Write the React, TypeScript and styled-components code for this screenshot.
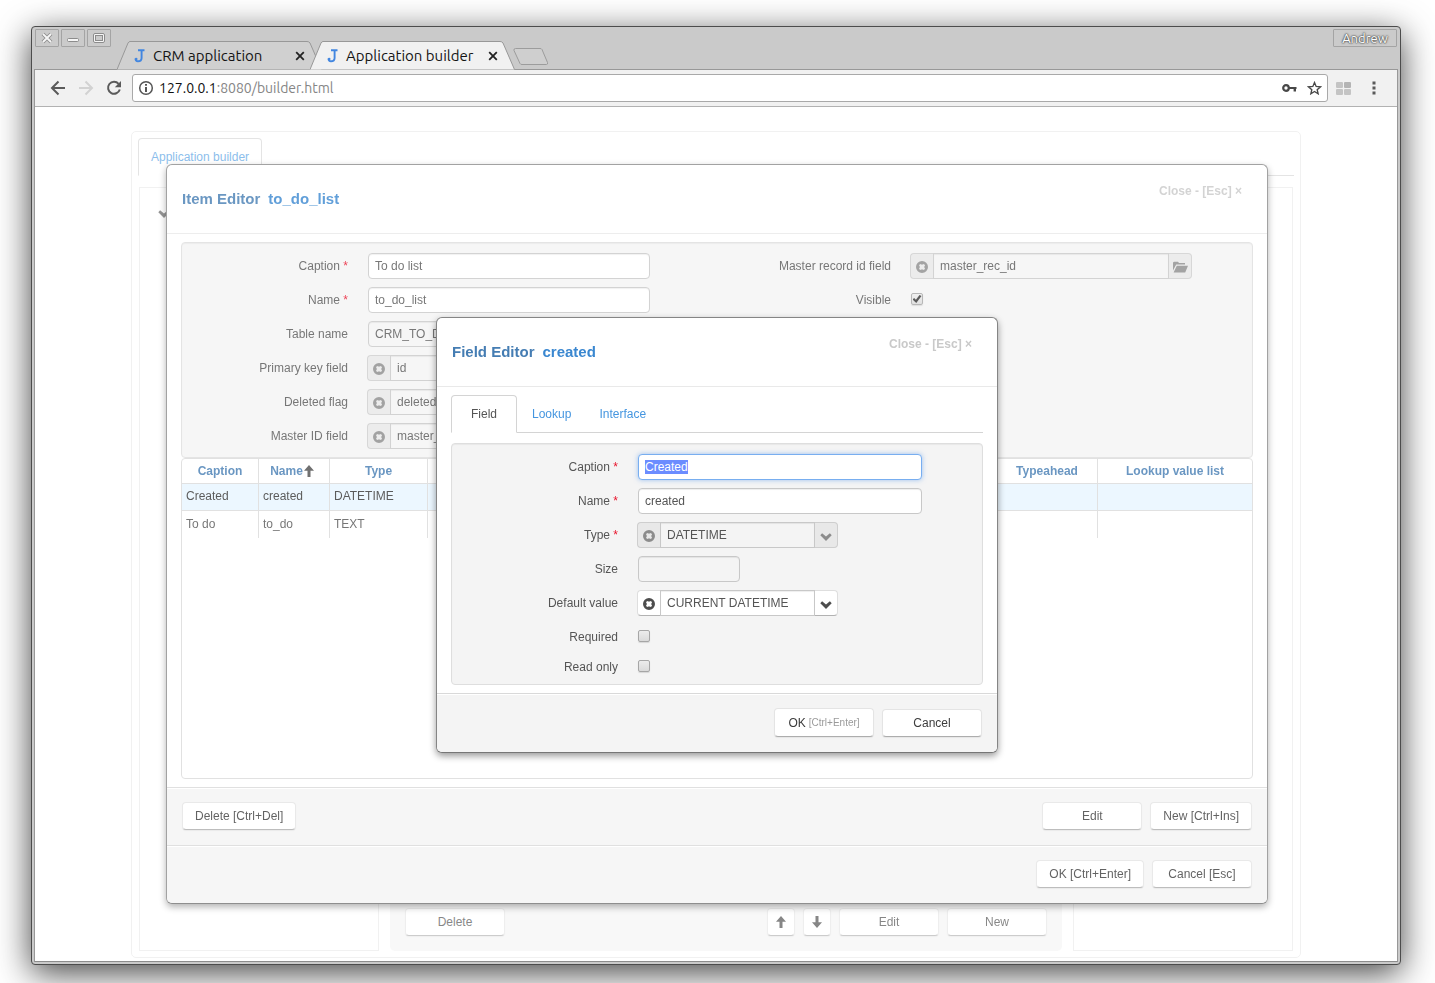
import React, { useEffect, useRef } from "react";
import styled, { createGlobalStyle, css } from "styled-components";

const GlobalStyle = createGlobalStyle`
  * { box-sizing: border-box; }
  body {
    margin: 0;
    background: #fff;
    font-family: "Liberation Sans", Arial, sans-serif;
    font-size: 12px;
    line-height: 18px;
    color: #555;
  }
  button, input { font: inherit; color: inherit; }
  ::selection { background: #6b8cff; color: #fff; }
`;

const UI_FONT = `Ubuntu, "Noto Sans", "Open Sans", sans-serif`;

/* ---------- Desktop window ---------- */

const Desktop = styled.div`
  height: 100vh;
  padding: 26px 34px 18px 31px;
  overflow: hidden;
  background: #fff;
`;

const Window = styled.div`
  display: flex;
  flex-direction: column;
  height: 100%;
  padding: 2px;
  border: 1px solid #4c4c4c;
  border-radius: 4px;
  background: #cacaca;
  box-shadow: 0 8px 34px rgba(0, 0, 0, 0.74);
`;

const TitleBar = styled.div`
  display: flex;
  align-items: flex-start;
  height: 40px;
  padding: 0 1px;
`;

const WindowButtons = styled.div`
  display: flex;
  gap: 2px;
`;

const WindowButton = styled.button`
  display: flex;
  align-items: center;
  justify-content: center;
  width: 24px;
  height: 18px;
  padding: 0;
  border: 1px solid #a4a4a4;
  border-radius: 1px;
  background: #cbcbcb;
`;

const TabStrip = styled.div`
  display: flex;
  flex: 1;
  align-self: flex-end;
  margin-left: 6px;
`;

const BrowserTab = styled.div<{ $active?: boolean }>`
  position: relative;
  z-index: ${(p) => (p.$active ? 2 : 1)};
  display: flex;
  align-items: center;
  width: 205px;
  height: 28px;
  margin-right: -12px;
  padding: 1px 17px 0 17px;
  color: #141414;
  font: 15px/20px ${UI_FONT};
`;

const TabShape = styled.svg`
  position: absolute;
  inset: 0;
`;

const TabTitle = styled.span`
  position: relative;
  flex: 1;
  margin-left: 7px;
  white-space: nowrap;
`;

const Favicon = styled.svg`
  position: relative;
  flex: none;
`;

const TabClose = styled.button`
  position: relative;
  display: flex;
  padding: 0;
  border: 0;
  background: none;
`;

const NewTab = styled.button`
  display: flex;
  margin: 7px 0 0 10px;
  padding: 0;
  border: 0;
  background: none;
`;

const UserButton = styled.button`
  width: 64px;
  height: 18px;
  padding: 0;
  border: 1px solid #a4a4a4;
  border-radius: 1px;
  background: #cbcbcb;
  color: #fff;
  font: 13px/16px ${UI_FONT};
  text-shadow: 0 0 1px #444, 0 0 2px #555, 0 0 2px #555;
`;

const Frame = styled.div`
  display: flex;
  flex: 1;
  flex-direction: column;
  min-height: 0;
  border: 1px solid #989898;
  border-bottom-color: #8c8c8c;
  background: #fff;
`;

const Toolbar = styled.div`
  display: flex;
  align-items: center;
  height: 37px;
  padding: 0 8px 0 9px;
  border-bottom: 1px solid #b2b2b2;
  background: #f1f1f1;
`;

const ToolButton = styled.button<{ $width?: number }>`
  display: flex;
  justify-content: center;
  width: ${(p) => p.$width ?? 28}px;
  padding: 0;
  border: 0;
  background: none;
`;

const Omnibox = styled.div`
  display: flex;
  flex: 1;
  align-items: center;
  height: 28px;
  margin: 0 1px 0 4px;
  padding: 0 5px;
  border: 1px solid #a9a9a9;
  border-radius: 3px;
  background: #fff;
`;

const Url = styled.div`
  flex: 1;
  margin-left: 5px;
  color: #858585;
  font: 14px/20px ${UI_FONT};
`;

const Host = styled.span`
  color: #111;
`;

/* ---------- Page behind the dialogs ---------- */

const Page = styled.div`
  position: relative;
  display: flex;
  flex: 1;
  justify-content: center;
  min-height: 0;
  padding: 24px 16px 3px;
  overflow: hidden;
`;

const Backdrop = styled.main`
  display: flex;
  flex: 1;
  flex-direction: column;
  max-width: 1170px;
  padding: 6px;
  border: 1px solid #e8e8e8;
  border-radius: 5px;
  opacity: 0.62;
`;

const TabBar = styled.div`
  display: flex;
  border-bottom: 1px solid #d4d4d4;
`;

const TabItem = styled.button<{ $active?: boolean; $link?: boolean }>`
  height: 38px;
  margin: 0 2px -1px 0;
  padding: 0 ${(p) => (p.$link ? 12 : 19)}px;
  border: 1px solid transparent;
  border-radius: 4px 4px 0 0;
  background: none;
  color: ${(p) => (p.$link || !p.$active ? "#4596e0" : "#555")};
  ${(p) =>
    p.$active &&
    css`
      border-color: #d4d4d4;
      border-bottom-color: #fff;
      background: #fff;
    `}
`;

const Columns = styled.div`
  display: grid;
  flex: 1;
  grid-template-columns: 240px 1fr 220px;
  gap: 11px;
  padding: 11px 1px 0;
`;

const SidePane = styled.section`
  display: flex;
  align-items: flex-start;
  padding: 20px 18px;
  border: 1px solid #e8e8e8;
`;

const MainPane = styled.section`
  display: flex;
  flex-direction: column;
  justify-content: flex-end;
`;

const PaneFooter = styled.div`
  display: flex;
  gap: 8px;
  padding: 15px;
  border-radius: 0 0 5px 5px;
  background: #f4f4f4;
`;

const Spacer = styled.div`
  flex: 1;
`;

const Button = styled.button<{ $icon?: boolean; $tall?: boolean }>`
  display: flex;
  align-items: center;
  justify-content: center;
  min-width: ${(p) => (p.$icon ? 28 : 100)}px;
  height: ${(p) => (p.$tall ? 29 : 28)}px;
  padding: 0 ${(p) => (p.$icon ? 0 : 12)}px;
  border: 1px solid #e4e4e4;
  border-bottom-color: #adadad;
  border-radius: 4px;
  background: #fff;
  color: #3c3c3c;
  box-shadow: 0 1px 1px rgba(0, 0, 0, 0.06);
`;

const Hint = styled.small`
  margin-left: 3px;
  color: #9a9a9a;
  font-size: 10px;
`;

/* ---------- Dialogs ---------- */

const Layer = styled.div<{ $top: number }>`
  position: absolute;
  inset: 0;
  display: flex;
  align-items: flex-start;
  justify-content: center;
  padding: ${(p) => p.$top}px 16px 0 18px;
`;

const Dialog = styled.section<{ $width: number; $behind?: boolean }>`
  width: 100%;
  max-width: ${(p) => p.$width}px;
  overflow: hidden;
  border: 1px solid ${(p) => (p.$behind ? "#a2a2a2" : "#858585")};
  border-bottom-color: ${(p) => (p.$behind ? "#8e8e8e" : "#767676")};
  border-radius: 6px;
  background: #fff;
  box-shadow: 0 3px 7px rgba(0, 0, 0, ${(p) => (p.$behind ? 0.3 : 0.4)});
`;

const DialogContent = styled.div<{ $behind?: boolean }>`
  opacity: ${(p) => (p.$behind ? 0.8 : 1)};
`;

const DialogHeader = styled.header`
  display: flex;
  justify-content: space-between;
  height: 69px;
  padding: 17px 25px 0 15px;
  border-bottom: 1px solid #e9e9e9;
`;

const DialogTitle = styled.h2`
  display: flex;
  gap: 8px;
  margin: 7px 0 0;
  color: #457db3;
  font-size: 15px;
  line-height: 20px;
`;

const TitleItem = styled.span`
  color: #3a87d0;
`;

const CloseButton = styled.button`
  height: 18px;
  padding: 0;
  border: 0;
  background: none;
  color: #c9c9c9;
  font-weight: bold;
`;

const DialogBody = styled.div`
  padding: 8px 14px;
`;

const Well = styled.div`
  display: grid;
  grid-auto-flow: column;
  grid-auto-columns: 1fr;
  gap: 16px;
  padding-top: 10px;
  border: 1px solid #dedede;
  border-radius: 4px;
  background: #f4f4f4;
  box-shadow: inset 0 1px 1px rgba(0, 0, 0, 0.05);
`;

const TabbedWell = styled(Well)`
  margin-top: 10px;
`;

const FieldRow = styled.div<{ $tight?: boolean }>`
  display: flex;
  align-items: center;
  height: 26px;
  margin-bottom: ${(p) => (p.$tight ? 4 : 8)}px;
`;

const Label = styled.label`
  width: 166px;
  margin-right: 19px;
  text-align: right;
`;

const Required = styled.span`
  color: #e8132b;
`;

const TextInput = styled.input<{ $width: number; $focused?: boolean }>`
  width: ${(p) => p.$width}px;
  height: 26px;
  margin: 0 1px;
  padding: 0 6px 1px;
  border: 1px solid #c8c8c8;
  border-radius: 4px;
  outline: none;
  background: #fff;
  box-shadow: inset 0 1px 1px rgba(0, 0, 0, 0.07);
  &:disabled {
    background: #f4f4f4;
    color: #555;
  }
  ${(p) =>
    p.$focused &&
    css`
      border-color: #78aef0;
      box-shadow: 0 0 5px rgba(82, 150, 236, 0.55);
    `}
`;

const Group = styled.div<{ $width: number }>`
  display: flex;
  width: ${(p) => p.$width}px;
`;

const GroupInput = styled.input`
  flex: 1;
  min-width: 0;
  height: 26px;
  padding: 0 6px 1px;
  border: 1px solid #c8c8c8;
  outline: none;
  background: #fff;
  box-shadow: inset 0 1px 1px rgba(0, 0, 0, 0.07);
  &:disabled {
    background: #f4f4f4;
    color: #555;
  }
`;

const AddOn = styled.button<{ $side: "left" | "right" }>`
  display: flex;
  align-items: center;
  justify-content: center;
  width: 23px;
  height: 26px;
  padding: 2px 0 0;
  border: 1px solid #dedede;
  border-bottom-color: #b2b2b2;
  ${(p) =>
    p.$side === "left"
      ? "border-right: 0; border-radius: 4px 0 0 4px;"
      : "border-left: 0; border-radius: 0 4px 4px 0;"}
  background: #fff;
  color: #4d4d4d;
  &:disabled {
    border-color: #cecece;
    background: #e8e8e8;
    color: #8c8c8c;
  }
`;

const Check = styled.input`
  appearance: none;
  display: grid;
  place-items: center;
  width: 12px;
  height: 12px;
  margin: 0 1px 2px;
  border: 1px solid #a6a6a6;
  border-radius: 2px;
  background: linear-gradient(#ececec, #dadada);
  box-shadow: 0 1px 1px rgba(0, 0, 0, 0.12);
  &:checked::before {
    content: "";
    width: 9px;
    height: 8px;
    background: #333;
    clip-path: polygon(0 55%, 18% 38%, 38% 58%, 78% 0, 100% 14%, 42% 100%);
  }
`;

const GridBox = styled.div`
  min-height: 321px;
  border: 1px solid #dadada;
  border-radius: 4px;
`;

const Grid = styled.table`
  width: 100%;
  border-collapse: separate;
  border-spacing: 0;
  table-layout: fixed;
`;

const HeadCell = styled.th<{ $width?: number }>`
  width: ${(p) => (p.$width ? `${p.$width}px` : "auto")};
  height: 25px;
  padding: 0;
  border-bottom: 1px solid #dadada;
  color: #457db3;
  & + & {
    border-left: 1px solid #dadada;
  }
`;

const Row = styled.tr<{ $selected?: boolean }>`
  background: ${(p) => (p.$selected ? "#e8f6ff" : "none")};
  color: ${(p) => (p.$selected ? "#333" : "#555")};
`;

const Cell = styled.td<{ $last?: boolean }>`
  height: 27px;
  padding: 0 4px 2px;
  ${(p) => !p.$last && "border-bottom: 1px solid #dadada;"}
  & + & {
    border-left: 1px solid #dadada;
  }
`;

const SortLabel = styled.span`
  display: inline-flex;
  align-items: center;
  gap: 1px;
  padding-right: 4px;
  color: #457db3;
  svg { color: #4d4d4d; }
`;

const DialogFooter = styled.footer`
  display: flex;
  align-items: flex-end;
  gap: 8px;
  padding: 14px 15px 15px;
  border-top: 1px solid #d9d9d9;
  background: #f4f4f4;
  box-shadow: inset 0 1px 0 #fff;
`;

/* ---------- Icons ---------- */

const RemoveIcon = () => (
  <svg width="12" height="12" viewBox="0 0 12 12" aria-hidden="true">
    <path
      d="M6 0A6 6 0 0 1 6 12A6 6 0 0 1 6 0ZM4.200 2.900 3 4.200 3.700 5.200V6.800L3 7.800 4.200 9.100 5.200 8.400H6.800L7.800 9.100 9.100 7.800 8.400 6.800V5.200L9.100 4.200 7.800 2.900 6.800 3.600H5.200Z"
      fill="currentColor"
      fillRule="evenodd"
    />
  </svg>
);

const ChevronIcon = () => (
  <svg width="12" height="10" viewBox="0 -2 12 10" aria-hidden="true">
    <path d="M2.1 0.2 6 3.6 9.9 0.2 11.7 2.2 6 8 0.3 2.2Z" fill="currentColor" />
  </svg>
);

const FolderIcon = () => (
  <svg width="15" height="12" viewBox="0 0 15 12" aria-hidden="true">
    <path d="M0 9.5V1.5L1 .8H5L6 2H12V3.6H3.2Z M3.8 4.8H15L12.2 11.6H.6Z" fill="currentColor" />
  </svg>
);

const ArrowIcon = ({ down }: { down?: boolean }) => (
  <svg width="10" height="12" viewBox="0 0 10 12" aria-hidden="true">
    <path
      d={down ? "M3.5 0h3v6.2H10L5 12 0 6.2h3.5Z" : "M3.5 12h3V5.8H10L5 0 0 5.8h3.5Z"}
      fill="currentColor"
    />
  </svg>
);

const TabCloseIcon = () => (
  <svg width="10" height="10" viewBox="0 0 10 10" aria-hidden="true">
    <path d="M1.2 1.2 8.8 8.8M8.8 1.2 1.2 8.8" stroke="#222" strokeWidth="1.8" />
  </svg>
);

const FaviconJ = () => (
  <Favicon width="12" height="14" viewBox="0 0 12 14" aria-hidden="true">
    <path
      d="M4 1.3H10.500M7.600 1.300V9C7.600 11.400 6 12.300 4 12.300 2.400 12.300 1.400 11.500 1.500 9.600"
      fill="none"
      stroke="#4286e0"
      strokeWidth="1.9"
    />
    <circle cx="2.200" cy="10" r="1.300" fill="#4286e0" />
  </Favicon>
);

/* ---------- Composite parts ---------- */

type TabProps = { title: string; active?: boolean };

const ChromeTab = ({ title, active }: TabProps) => (
  <BrowserTab $active={active}>
    <TabShape width="205" height="29" viewBox="0 0 205 29" aria-hidden="true">
      <path
        d="M0 28.5 11 2Q12 .5 13 .5H190Q192 .5 193 2L204.500 28.5"
        fill={active ? "#f1f1f1" : "#d0d0d0"}
        stroke="#989898"
      />
    </TabShape>
    <FaviconJ />
    <TabTitle>{title}</TabTitle>
    <TabClose aria-label={`Close ${title}`}>
      <TabCloseIcon />
    </TabClose>
  </BrowserTab>
);

type FieldProps = {
  id: string;
  label: string;
  required?: boolean;
  tight?: boolean;
  children: React.ReactNode;
};

const Field = ({ id, label, required, tight, children }: FieldProps) => (
  <FieldRow $tight={tight}>
    <Label htmlFor={id}>
      {label}
      {required && <Required> *</Required>}
    </Label>
    {children}
  </FieldRow>
);

type PickerProps = {
  id: string;
  value: string;
  width: number;
  disabled?: boolean;
  icon: React.ReactNode;
};

const Picker = ({ id, value, width, disabled, icon }: PickerProps) => (
  <Group $width={width}>
    <AddOn $side="left" disabled={disabled} aria-label="Clear">
      <RemoveIcon />
    </AddOn>
    <GroupInput id={id} defaultValue={value} disabled={disabled} />
    <AddOn $side="right" disabled={disabled} aria-label="Choose">
      {icon}
    </AddOn>
  </Group>
);

const BrowserToolbar = () => (
  <Toolbar>
    <ToolButton aria-label="Back">
      <svg width="16" height="16" viewBox="0 0 16 16">
        <path d="M15 8H2.500M8.500 1.500 2 8 8.500 14.500" fill="none" stroke="#5a5a5a" strokeWidth="2" />
      </svg>
    </ToolButton>
    <ToolButton aria-label="Forward">
      <svg width="16" height="16" viewBox="0 0 16 16">
        <path d="M1 8H13.500M7.500 1.500 14 8 7.500 14.500" fill="none" stroke="#d2d2d2" strokeWidth="2" />
      </svg>
    </ToolButton>
    <ToolButton aria-label="Reload">
      <svg width="16" height="16" viewBox="0 0 16 16">
        <path d="M12.600 3.800A6 6 0 1 0 13.800 9.500" fill="none" stroke="#5a5a5a" strokeWidth="2" />
        <path d="M15 1V7.200H8.800Z" fill="#5a5a5a" />
      </svg>
    </ToolButton>
    <Omnibox>
      <svg width="16" height="16" viewBox="0 0 16 16" aria-hidden="true">
        <circle cx="8" cy="8" r="6.300" fill="none" stroke="#555" strokeWidth="1.500" />
        <path d="M7.100 7H8.900V12H7.100ZM7.100 4H8.900V5.700H7.100Z" fill="#444" />
      </svg>
      <Url>
        <Host>127.0.0.1</Host>:8080/builder.html
      </Url>
      <ToolButton $width={36} aria-label="Saved passwords">
        <svg width="15" height="8" viewBox="0 0 15 8">
          <circle cx="4" cy="4" r="2.800" fill="none" stroke="#484848" strokeWidth="2.200" />
          <path d="M7 3H14.500V5H14V7.500H11.600V5H7Z" fill="#484848" />
        </svg>
      </ToolButton>
      <svg width="15" height="14" viewBox="0 0 24 23" aria-hidden="true">
        <path
          d="M12 2.500 14.700 9 21.800 9.600 16.400 14.200 18 21 12 17.300 6 21 7.600 14.200 2.200 9.600 9.300 9Z"
          fill="none"
          stroke="#484848"
          strokeWidth="2.200"
        />
      </svg>
    </Omnibox>
    <ToolButton $width={30} aria-label="Extension">
      <svg width="16" height="13" viewBox="0 0 16 13">
        <rect width="7" height="6" rx="1" fill="#c4c4c4" />
        <rect x="8" width="7" height="6" rx="1" fill="#b4b4b4" />
        <rect y="7" width="7" height="6" rx="1" fill="#c4c4c4" />
        <rect x="8" y="7" width="7" height="6" rx="1" fill="#c4c4c4" />
      </svg>
    </ToolButton>
    <ToolButton $width={30} aria-label="Menu">
      <svg width="4" height="14" viewBox="0 0 4 14">
        <path d="M.5.500h3v3h-3ZM.5 5.500h3v3h-3ZM.5 10.500h3v3h-3Z" fill="#5a5a5a" />
      </svg>
    </ToolButton>
  </Toolbar>
);

const ItemEditor = () => (
  <Dialog $width={1102} $behind>
    <DialogContent $behind>
      <DialogHeader>
        <DialogTitle>
          Item Editor <TitleItem>to_do_list</TitleItem>
        </DialogTitle>
        <CloseButton>Close - [Esc] ×</CloseButton>
      </DialogHeader>
      <DialogBody>
        <Well>
          <div>
            <Field id="item-caption" label="Caption" required>
              <TextInput id="item-caption" $width={282} defaultValue="To do list" />
            </Field>
            <Field id="item-name" label="Name" required>
              <TextInput id="item-name" $width={282} defaultValue="to_do_list" />
            </Field>
            <Field id="item-table" label="Table name">
              <TextInput id="item-table" $width={282} defaultValue="CRM_TO_DO_LIST" disabled />
            </Field>
            <Field id="item-key" label="Primary key field">
              <Picker id="item-key" value="id" width={282} disabled icon={<FolderIcon />} />
            </Field>
            <Field id="item-deleted" label="Deleted flag">
              <Picker id="item-deleted" value="deleted" width={282} disabled icon={<FolderIcon />} />
            </Field>
            <Field id="item-master" label="Master ID field">
              <Picker id="item-master" value="master_id" width={282} disabled icon={<FolderIcon />} />
            </Field>
          </div>
          <div>
            <Field id="item-record" label="Master record id field">
              <Picker id="item-record" value="master_rec_id" width={282} disabled icon={<FolderIcon />} />
            </Field>
            <Field id="item-visible" label="Visible">
              <Check id="item-visible" type="checkbox" defaultChecked />
            </Field>
          </div>
        </Well>
        <GridBox>
          <Grid>
            <thead>
              <tr>
                <HeadCell $width={76}>Caption</HeadCell>
                <HeadCell $width={71}>
                  <SortLabel>
                    Name
                    <ArrowIcon />
                  </SortLabel>
                </HeadCell>
                <HeadCell $width={98}>Type</HeadCell>
                <HeadCell />
                <HeadCell $width={101}>Typeahead</HeadCell>
                <HeadCell $width={155}>Lookup value list</HeadCell>
              </tr>
            </thead>
            <tbody>
              {[
                ["Created", "created", "DATETIME", "", "", ""],
                ["To do", "to_do", "TEXT", "", "", ""],
              ].map((cells, r) => (
                <Row key={cells[0]} $selected={r === 0}>
                  {cells.map((text, c) => (
                    <Cell key={c} $last={r === 1}>
                      {text}
                    </Cell>
                  ))}
                </Row>
              ))}
            </tbody>
          </Grid>
        </GridBox>
      </DialogBody>
      <DialogFooter>
        <Button>Delete [Ctrl+Del]</Button>
        <Spacer />
        <Button>Edit</Button>
        <Button>New [Ctrl+Ins]</Button>
      </DialogFooter>
      <DialogFooter>
        <Spacer />
        <Button>OK [Ctrl+Enter]</Button>
        <Button>Cancel [Esc]</Button>
      </DialogFooter>
    </DialogContent>
  </Dialog>
);

const FieldEditor = () => {
  const caption = useRef<HTMLInputElement>(null);

  useEffect(() => {
    caption.current?.focus({ preventScroll: true });
    caption.current?.select();
  }, []);

  return (
    <Dialog $width={562}>
      <DialogContent>
        <DialogHeader>
          <DialogTitle>
            Field Editor <TitleItem>created</TitleItem>
          </DialogTitle>
          <CloseButton>Close - [Esc] ×</CloseButton>
        </DialogHeader>
        <DialogBody>
          <TabBar>
            <TabItem $active>Field</TabItem>
            <TabItem $link>Lookup</TabItem>
            <TabItem $link>Interface</TabItem>
          </TabBar>
          <TabbedWell>
            <div>
              <Field id="field-caption" label="Caption" required>
                <TextInput ref={caption} id="field-caption" $width={284} $focused defaultValue="Created" />
              </Field>
              <Field id="field-name" label="Name" required>
                <TextInput id="field-name" $width={284} defaultValue="created" />
              </Field>
              <Field id="field-type" label="Type" required>
                <Picker id="field-type" value="DATETIME" width={201} disabled icon={<ChevronIcon />} />
              </Field>
              <Field id="field-size" label="Size">
                <TextInput id="field-size" $width={102} disabled />
              </Field>
              <Field id="field-default" label="Default value">
                <Picker id="field-default" value="CURRENT DATETIME" width={201} icon={<ChevronIcon />} />
              </Field>
              <Field id="field-required" label="Required" tight>
                <Check id="field-required" type="checkbox" />
              </Field>
              <Field id="field-readonly" label="Read only" tight>
                <Check id="field-readonly" type="checkbox" />
              </Field>
            </div>
          </TabbedWell>
        </DialogBody>
        <DialogFooter>
          <Spacer />
          <Button $tall>
            OK<Hint>[Ctrl+Enter]</Hint>
          </Button>
          <Button>Cancel</Button>
        </DialogFooter>
      </DialogContent>
    </Dialog>
  );
};

export default function App() {
  return (
    <>
      <GlobalStyle />
      <Desktop>
        <Window>
          <TitleBar>
            <WindowButtons>
              <WindowButton aria-label="Close window">
                <svg width="12" height="12" viewBox="0 0 12 12">
                  <path d="M2 2 10 10M10 2 2 10" stroke="#8c8c8c" strokeWidth="3.800" />
                  <path d="M2 2 10 10M10 2 2 10" stroke="#f6f6f6" strokeWidth="1.900" />
                </svg>
              </WindowButton>
              <WindowButton aria-label="Minimize window">
                <svg width="12" height="12" viewBox="0 0 12 12">
                  <rect x=".5" y="6.500" width="11" height="3" rx="1" fill="#f6f6f6" stroke="#8c8c8c" />
                </svg>
              </WindowButton>
              <WindowButton aria-label="Maximize window">
                <svg width="12" height="12" viewBox="0 0 12 12">
                  <rect x=".5" y="1.500" width="11" height="9" rx="1.500" fill="#f6f6f6" stroke="#8c8c8c" />
                  <rect x="2.500" y="3.500" width="7" height="5" fill="#cbcbcb" stroke="#8c8c8c" />
                </svg>
              </WindowButton>
            </WindowButtons>
            <TabStrip>
              <ChromeTab title="CRM application" />
              <ChromeTab title="Application builder" active />
              <NewTab aria-label="New tab">
                <svg width="36" height="18" viewBox="0 0 36 18">
                  <path
                    d="M2.500.500H27Q28.500.500 29 1.500L34.500 14.500Q35 16.500 33.500 16.500H9Q7.500 16.500 7 15.500L1 2.500Q.5.500 2.500.500Z"
                    fill="#cfcfcf"
                    stroke="#9c9c9c"
                  />
                </svg>
              </NewTab>
            </TabStrip>
            <UserButton>Andrew</UserButton>
          </TitleBar>
          <Frame>
            <BrowserToolbar />
            <Page>
              <Backdrop>
                <TabBar>
                  <TabItem $active $link>
                    Application builder
                  </TabItem>
                </TabBar>
                <Columns>
                  <SidePane>
                    <ChevronIcon />
                  </SidePane>
                  <MainPane>
                    <PaneFooter>
                      <Button>Delete</Button>
                      <Spacer />
                      <Button $icon aria-label="Move up">
                        <ArrowIcon />
                      </Button>
                      <Button $icon aria-label="Move down">
                        <ArrowIcon down />
                      </Button>
                      <Button>Edit</Button>
                      <Button>New</Button>
                    </PaneFooter>
                  </MainPane>
                  <SidePane />
                </Columns>
              </Backdrop>
              <Layer $top={57}>
                <ItemEditor />
              </Layer>
              <Layer $top={210}>
                <FieldEditor />
              </Layer>
            </Page>
          </Frame>
        </Window>
      </Desktop>
    </>
  );
}
